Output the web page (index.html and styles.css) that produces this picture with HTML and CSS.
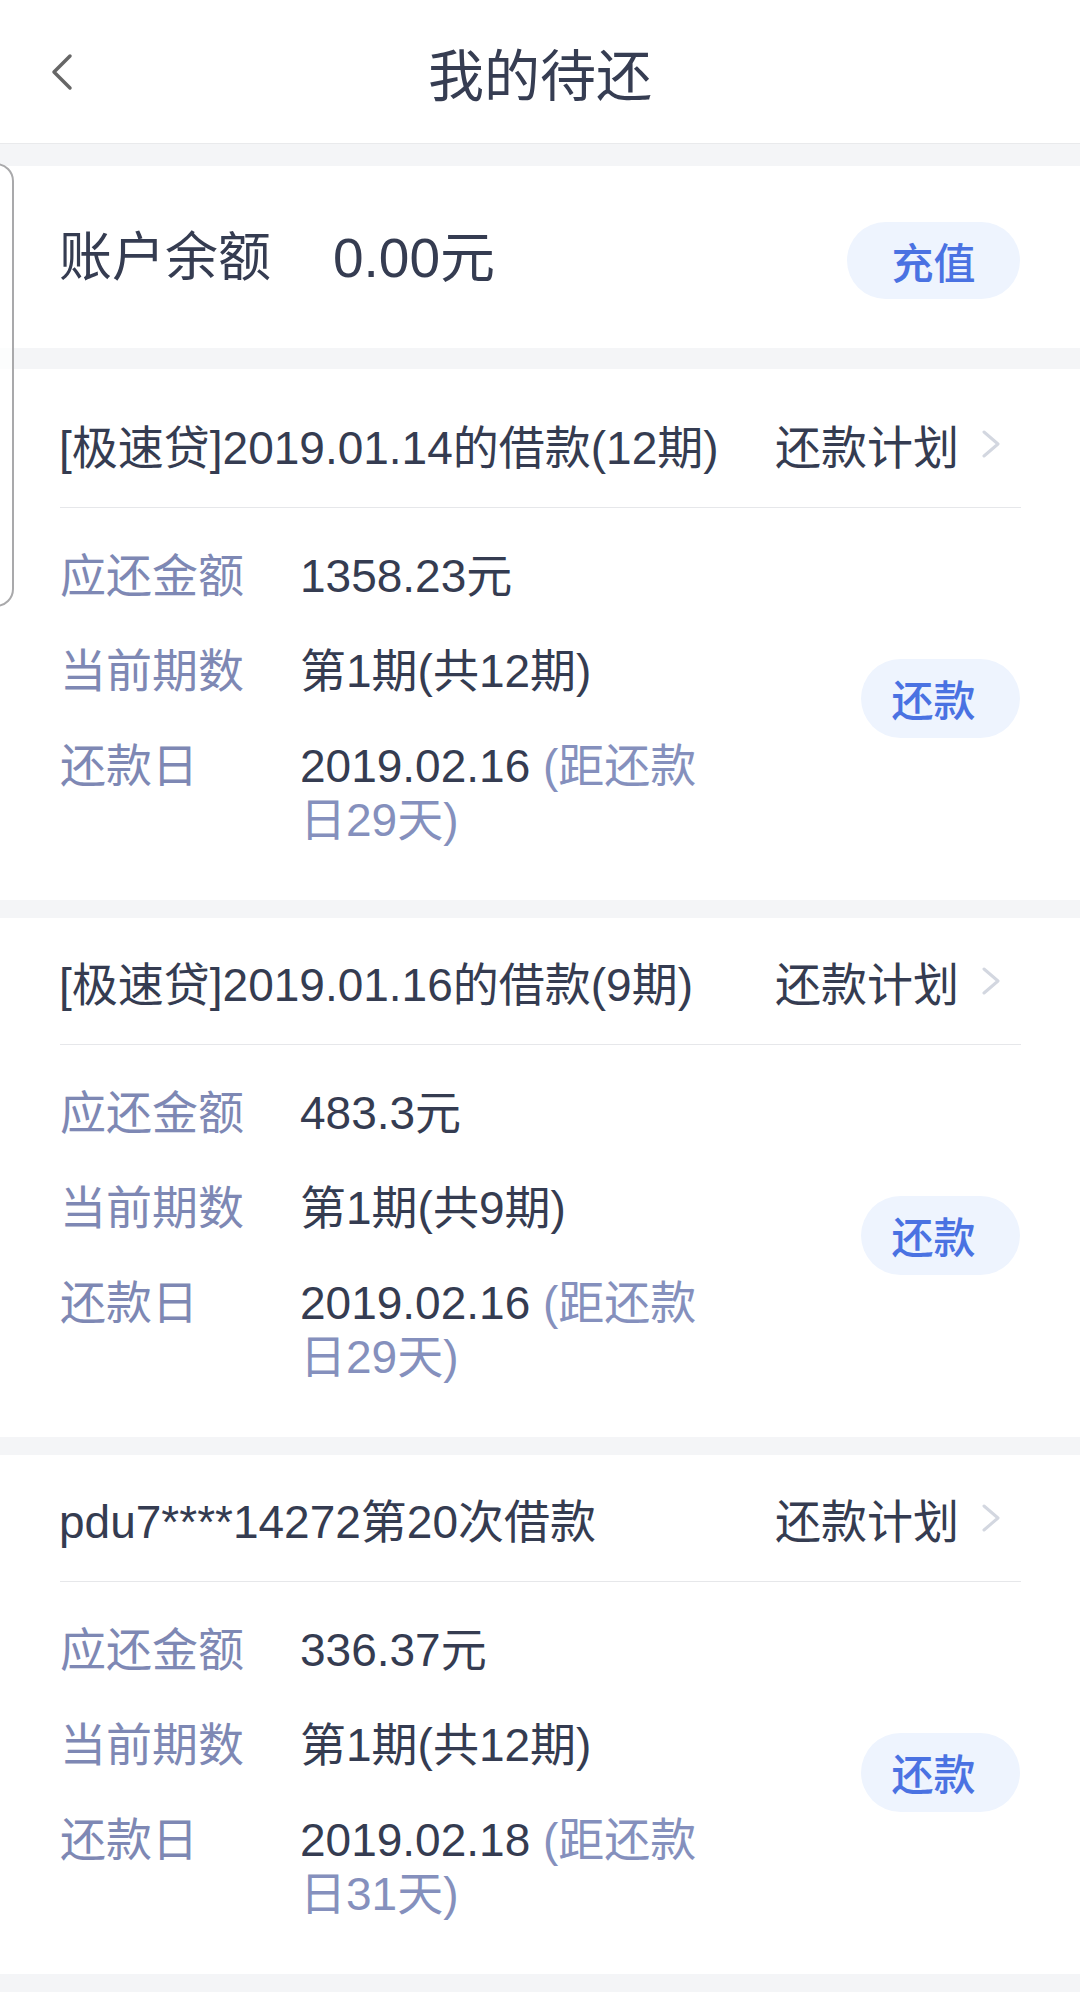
FILE: index.html
```html
<!DOCTYPE html>
<html lang="zh-CN">
<head>
<meta charset="utf-8">
<title>我的待还</title>
<link rel="stylesheet" href="styles.css">
</head>
<body>
<div class="page">
  <header class="topbar">
    <div class="topbar-left">
      <svg class="back" width="26" height="38" viewBox="0 0 26 38"><path d="M21 3 L5 19 L21 35" fill="none" stroke="#666" stroke-width="3.5" stroke-linecap="round" stroke-linejoin="round"/></svg>
    </div>
    <h1 class="title">我的待还</h1>
    <div class="topbar-right"></div>
  </header>

  <section class="balance">
    <span class="balance-label">账户余额</span>
    <span class="balance-amount">0.00元</span>
    <button class="pill pill-wide">充值</button>
  </section>

  <main class="loans">
    <section class="loan loan-first">
      <div class="loan-head">
        <span class="loan-name">[极速贷]2019.01.14的借款(12期)</span>
        <span class="plan">还款计划<svg class="chev" width="20" height="28" viewBox="0 0 20 28"><path d="M3 2 L17 14 L3 26" fill="none" stroke="#d3d7e0" stroke-width="3" stroke-linecap="round" stroke-linejoin="round"/></svg></span>
      </div>
      <div class="loan-body">
        <dl class="facts">
          <div class="fact"><dt>应还金额</dt><dd>1358.23元</dd></div>
          <div class="fact"><dt>当前期数</dt><dd>第1期(共12期)</dd></div>
          <div class="fact"><dt>还款日</dt><dd><span class="date">2019.02.16 </span><span class="hint">(距还款</span><span class="hint">日29天)</span></dd></div>
        </dl>
        <button class="pill">还款</button>
      </div>
    </section>

    <section class="loan">
      <div class="loan-head">
        <span class="loan-name">[极速贷]2019.01.16的借款(9期)</span>
        <span class="plan">还款计划<svg class="chev" width="20" height="28" viewBox="0 0 20 28"><path d="M3 2 L17 14 L3 26" fill="none" stroke="#d3d7e0" stroke-width="3" stroke-linecap="round" stroke-linejoin="round"/></svg></span>
      </div>
      <div class="loan-body">
        <dl class="facts">
          <div class="fact"><dt>应还金额</dt><dd>483.3元</dd></div>
          <div class="fact"><dt>当前期数</dt><dd>第1期(共9期)</dd></div>
          <div class="fact"><dt>还款日</dt><dd><span class="date">2019.02.16 </span><span class="hint">(距还款</span><span class="hint">日29天)</span></dd></div>
        </dl>
        <button class="pill">还款</button>
      </div>
    </section>

    <section class="loan">
      <div class="loan-head">
        <span class="loan-name">pdu7****14272第20次借款</span>
        <span class="plan">还款计划<svg class="chev" width="20" height="28" viewBox="0 0 20 28"><path d="M3 2 L17 14 L3 26" fill="none" stroke="#d3d7e0" stroke-width="3" stroke-linecap="round" stroke-linejoin="round"/></svg></span>
      </div>
      <div class="loan-body">
        <dl class="facts">
          <div class="fact"><dt>应还金额</dt><dd>336.37元</dd></div>
          <div class="fact"><dt>当前期数</dt><dd>第1期(共12期)</dd></div>
          <div class="fact"><dt>还款日</dt><dd><span class="date">2019.02.18 </span><span class="hint">(距还款</span><span class="hint">日31天)</span></dd></div>
        </dl>
        <button class="pill">还款</button>
      </div>
    </section>
  </main>

  <div class="side-handle"></div>
</div>
</body>
</html>
```

FILE: styles.css
```css
* { box-sizing: border-box; }

html, body {
  margin: 0;
  padding: 0;
}

body {
  background: #f4f5f7;
  font-family: "Liberation Sans", "Noto Sans CJK SC", sans-serif;
  color: #353c51;
}

.page {
  position: relative;
  width: 1080px;
  min-height: 1992px;
}

/* header */
.topbar {
  height: 144px;
  background: #fff;
  border-bottom: 1px solid #e9eaec;
  display: grid;
  grid-template-columns: 1fr auto 1fr;
  align-items: center;
}

.topbar-left {
  padding-left: 49px;
  display: flex;
  align-items: center;
}

.back { display: block; }

.title {
  margin: 0;
  font-size: 56px;
  font-weight: normal;
  color: #363d52;
  line-height: 1;
  font-family: "Noto Sans CJK SC", sans-serif;
}

/* balance */
.balance {
  margin-top: 22px;
  height: 182px;
  background: #fff;
  display: flex;
  align-items: center;
  padding: 0 60px 8px 59px;
}

.balance-label {
  font-size: 53px;
  color: #353c51;
}

.balance-amount {
  margin-left: 62px;
  font-size: 55px;
  color: #353c51;
}

.pill {
  margin-left: auto;
  flex: none;
  width: 159px;
  height: 79px;
  border: none;
  border-radius: 40px;
  background: #eef4fe;
  color: #4a72e2;
  font-family: "Noto Sans CJK SC", sans-serif;
  font-size: 42px;
  font-weight: 500;
  padding: 0 14px 0 0;
  line-height: 1;
}

.pill-wide {
  width: 173px;
  height: 77px;
  margin-top: 15px;
  padding: 0;
}

/* loans */
.loans {
  margin-top: 21px;
  display: flex;
  flex-direction: column;
  gap: 18px;
  padding-bottom: 18px;
}

.loan {
  background: #fff;
  padding: 0 59px 0 60px;
}

.loan-first { padding-top: 12px; }

.loan-head {
  height: 127px;
  border-bottom: 1px solid #e6e7ea;
  display: flex;
  align-items: center;
  justify-content: space-between;
  font-size: 46px;
  color: #353c51;
}

.loan-name { margin-left: -1px; }

.plan {
  display: flex;
  align-items: center;
}

.chev {
  display: block;
  margin-left: 22px;
  margin-right: 20px;
}

.loan-body {
  display: flex;
  align-items: center;
  padding: 41px 1px 53px 0;
}

.facts {
  margin: 0;
  display: flex;
  flex-direction: column;
  gap: 41px;
}

.fact {
  display: flex;
  font-size: 46px;
  line-height: 54px;
}

.fact dt {
  width: 240px;
  flex: none;
  color: #7e88b4;
}

.fact dd {
  margin: 0;
  width: 420px;
  color: #353c51;
}

.hint { color: #8590bd; }

/* floating side handle overlay */
.side-handle {
  position: absolute;
  left: -22px;
  top: 163px;
  width: 36px;
  height: 444px;
  border: 2px solid #a9a9ab;
  border-radius: 18px;
  background: rgba(255, 255, 255, 0.75);
}
```
